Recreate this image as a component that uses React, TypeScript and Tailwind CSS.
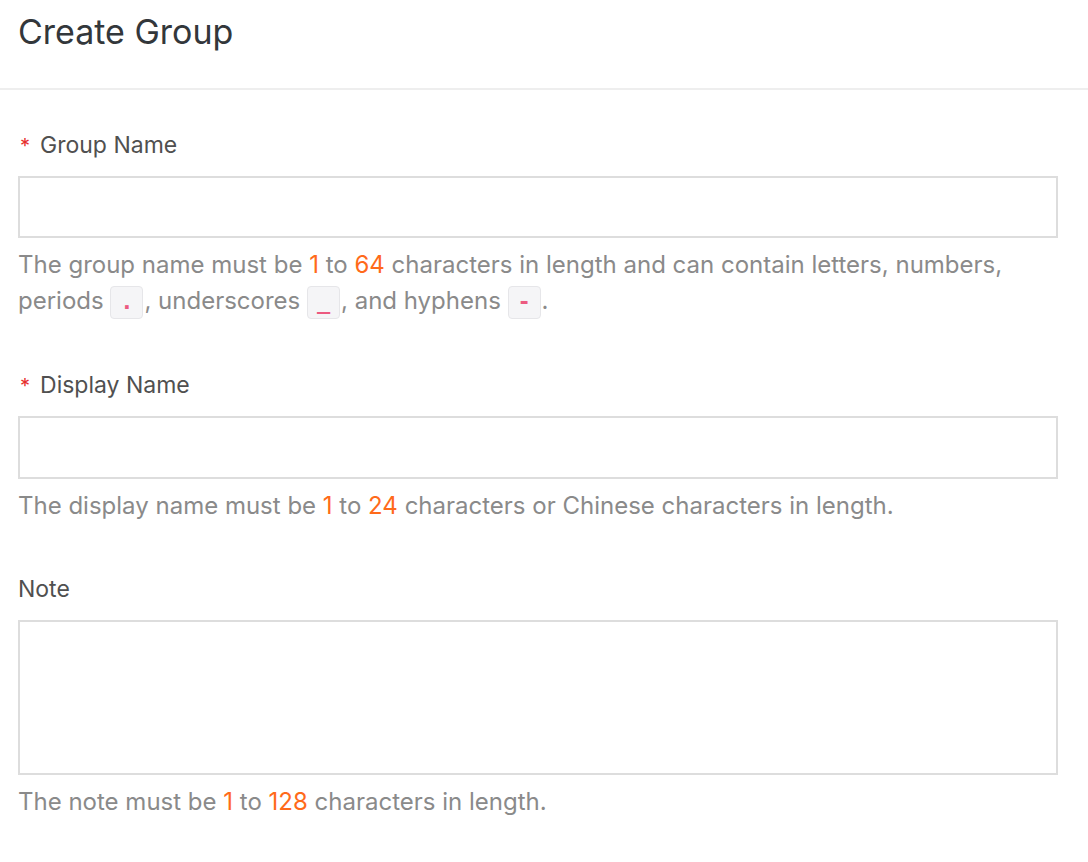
import React from 'react';

const Num: React.FC<{ children: React.ReactNode }> = ({ children }) => (
  <span className="text-[#ff6a1a]">{children}</span>
);

const Code: React.FC<{ children: React.ReactNode }> = ({ children }) => (
  <code className="inline-flex items-center justify-center h-[33px] min-w-[33px] px-[8px] mr-[1px] align-middle rounded-[4px] border border-[#e6e6e9] bg-[#f5f5f7] text-[#ec5a80] text-[22px] font-bold font-['DejaVu_Sans_Mono',monospace] leading-none">
    {children}
  </code>
);

const Label: React.FC<{ required?: boolean; children: React.ReactNode }> = ({ required, children }) => (
  <label className="block text-[23px] leading-[28px] text-[#505050]">
    {required && <span className="text-[#e62e2e] ml-[2px] mr-[10px] text-[20px]">*</span>}
    {children}
  </label>
);

const Help: React.FC<{ children: React.ReactNode }> = ({ children }) => (
  <p className="mt-[9px] text-[24px] leading-[36px] text-[#8a8a8a]">{children}</p>
);

export default function App() {
  return (
    <div className="min-h-screen bg-white font-['Inter','Liberation_Sans',sans-serif]">
      <div className="h-[90px] border-b-2 border-[#eeeeee] pl-[18px] pt-[12px]">
        <h1 className="text-[34px] leading-[40px] text-[#33373b]">Create Group</h1>
      </div>

      <div className="pl-[18px] pr-[30px] pt-[41px]">
        <Label required>Group Name</Label>
        <input className="mt-[16px] block w-full h-[62px] border-2 border-[#dddddd] outline-none px-3 text-[20px]" />
        <Help>
          The group name must be <Num>1</Num> to <Num>64</Num> characters in length and can contain letters, numbers,
          periods <Code>.</Code>, underscores <Code>_</Code>, and hyphens <Code>-</Code>.
        </Help>

        <div className="mt-[52px]">
          <Label required>Display Name</Label>
          <input className="mt-[16px] block w-full h-[63px] border-2 border-[#dddddd] outline-none px-3 text-[20px]" />
          <Help>
            The display name must be <Num>1</Num> to <Num>24</Num> characters or Chinese characters in length.
          </Help>
        </div>

        <div className="mt-[51px]">
          <Label>Note</Label>
          <textarea className="mt-[17px] block w-full h-[155px] border-2 border-[#dddddd] outline-none p-3 text-[20px] resize-none" />
          <Help>
            The note must be <Num>1</Num> to <Num>128</Num> characters in length.
          </Help>
        </div>
      </div>
    </div>
  );
}
